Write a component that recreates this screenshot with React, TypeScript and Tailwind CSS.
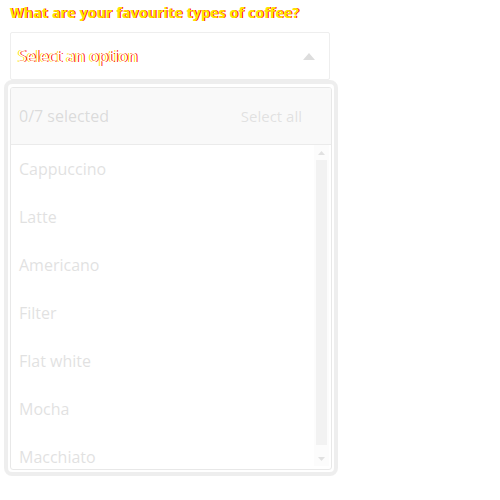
const options = ['Cappuccino', 'Latte', 'Americano', 'Filter', 'Flat white', 'Mocha', 'Macchiato']

const App = () => {
  return (
    <div className="w-[500px] h-[500px] bg-white font-['Open_Sans',sans-serif] relative">
      <div className="px-[10px] pt-[4px]">
        <div className="text-[14px] font-bold leading-[18px] tracking-[0.2px] text-[#ffe600] [text-shadow:1px_0_0_#ff0000]">
          What are your favourite types of coffee?
        </div>
        <div className="mt-[10px] w-[320px] h-[48px] border border-[#eeeeee] rounded-[2px] flex items-center justify-between pl-[7px] pr-[14px]">
          <span className="text-[16px] text-white [text-shadow:1px_0_0_#ff0000,-1px_0_0_#ffe600]">Select an option</span>
          <svg width="12" height="7" viewBox="0 0 12 7">
            <path d="M6 0 L12 7 L0 7 Z" fill="#dddddd" />
          </svg>
        </div>
      </div>
      <div className="absolute left-[4px] top-[80px] w-[334px] h-[396px] border-4 border-[#afafaf] rounded-lg bg-white px-[2px] pt-[3px] pb-[2px] opacity-20">
        <div className="h-full border border-[#919191] rounded-[3px] flex flex-col overflow-hidden">
          <div className="h-[57px] shrink-0 bg-[#e6e6e6] border-b border-[#a0a0a0] flex items-center justify-between pl-[8px] pr-[29px]">
            <span className="text-[16px] text-[#505050]">0/7 selected</span>
            <span className="text-[15px] text-[#6e6e6e]">Select all</span>
          </div>
          <div className="flex-1 flex min-h-0 pr-[2px] pb-[3px]">
            <div className="flex-1 overflow-hidden">
              {options.map((o) => (
                <div key={o} className="h-[48px] flex items-center px-[8px] text-[16px] text-[#6e6e6e]">
                  {o}
                </div>
              ))}
            </div>
            <div className="w-[15px] flex flex-col bg-[#f1f1f1]">
              <div className="h-[15px] flex items-center justify-center">
                <svg width="7" height="4" viewBox="0 0 7 4">
                  <path d="M3.5 0 L7 4 L0 4 Z" fill="#707070" />
                </svg>
              </div>
              <div className="flex-1 px-[2px] pb-[6px]">
                <div className="h-full bg-[#c1c1c1]" />
              </div>
              <div className="h-[15px] flex items-center justify-center">
                <svg width="7" height="4" viewBox="0 0 7 4">
                  <path d="M0 0 L7 0 L3.5 4 Z" fill="#707070" />
                </svg>
              </div>
            </div>
          </div>
        </div>
      </div>
    </div>
  )
}

export default App
